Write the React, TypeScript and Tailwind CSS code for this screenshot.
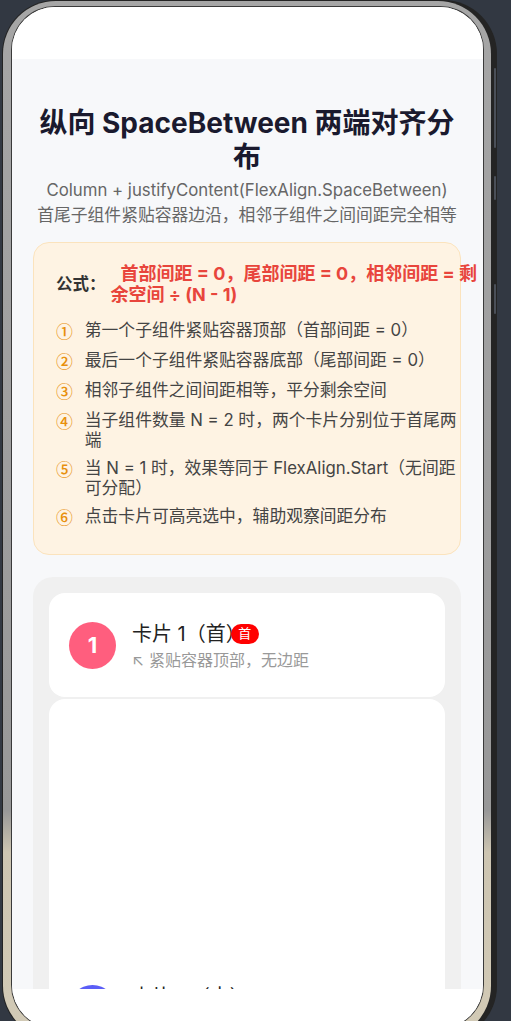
import React from "react";

const FONT = 'Inter, "Noto Sans CJK SC", sans-serif';
const CJK = '"Noto Sans CJK SC", sans-serif';

const items: string[] = [
  "第一个子组件紧贴容器顶部（首部间距 = 0）",
  "最后一个子组件紧贴容器底部（尾部间距 = 0）",
  "相邻子组件之间间距相等，平分剩余空间",
  "当子组件数量 N = 2 时，两个卡片分别位于首尾两端",
  "当 N = 1 时，效果等同于 FlexAlign.Start（无间距可分配）",
  "点击卡片可高亮选中，辅助观察间距分布",
];
const marks = ["①", "②", "③", "④", "⑤", "⑥"];

export default function App() {
  return (
    <div className="h-[1021px] w-full overflow-hidden bg-[#323842]" style={{ fontFamily: FONT }}>
      <div className="relative ml-[2px] h-[1040px] w-[495px] rounded-[54px] bg-[#242424] pl-[1px] pr-[6px] pt-[1px] pb-[1px]">
        {/* side buttons */}
        <div className="absolute right-[1px] top-[68px] h-[80px] w-[2px] rounded-full bg-[#4a4f58]" />
        <div className="absolute right-[1px] top-[176px] h-[24px] w-[2px] rounded-full bg-[#4a4f58]" />
        <div className="absolute right-[1px] top-[284px] h-[30px] w-[2px] rounded-full bg-[#4a4f58]" />
        <div className="h-full rounded-[53px] bg-[linear-gradient(to_bottom,#a6a6a6_0%,#989898_78%,#cdc5b1_82%,#d2cab6_100%)] pb-[10px] pl-[8px] pr-[7px] pt-[5px]">
          <div className="h-full rounded-[44px] bg-[#3a3a3a] p-[1px]">
            <div className="flex h-full flex-col overflow-hidden rounded-[43px] bg-white">
              <div className="h-[52px] shrink-0 bg-white" />
              <div className="h-[930px] shrink-0 overflow-hidden bg-[#f7f8fa] pl-[21px] pr-[22px] pt-[47px]">
                <h1
                  className="text-center text-[28px] font-bold leading-[34px] text-[#1a1a2e]"
                  style={{ fontFamily: FONT }}
                >
                  纵向 SpaceBetween 两端对齐分布
                </h1>
                <div className="mt-[4px] text-center text-[16.8px] leading-[24.5px] text-[#666666]">
                  <div>Column + justifyContent(FlexAlign.SpaceBetween)</div>
                  <div>首尾子组件紧贴容器边沿，相邻子组件之间间距完全相等</div>
                </div>

                <div className="mt-[15px] rounded-[16px] border border-[#fbe3bd] bg-[#fef3e3] pb-[26px] pl-[22px] pr-[22px] pt-[20px]">
                  <div className="flex items-center">
                    <span className="shrink-0 text-[16.5px] font-bold text-[#333333]">公式：</span>
                    <p className="ml-[5px] w-[375px] shrink-0 indent-[10px] text-[18px] font-bold leading-[21px] text-[#e8453c]">
                      首部间距 = 0，尾部间距 = 0，相邻间距 = 剩余空间 ÷ (N - 1)
                    </p>
                  </div>
                  <div className="mt-[15px] flex flex-col gap-[8px]">
                    {items.map((t, i) => (
                      <div key={i} className="flex items-start">
                        <span
                          className="shrink-0 text-[16.8px] font-medium leading-[22px] text-[#e8900c]"
                          style={{ fontFamily: CJK }}
                        >
                          {marks[i]}
                        </span>
                        <span className="ml-[12px] w-[380px] shrink-0 pt-[1px] text-[16.8px] leading-[19.5px] text-[#444444]">
                          {t}
                        </span>
                      </div>
                    ))}
                  </div>
                </div>

                <div className="mt-[22px] rounded-[20px] bg-[#f0f0f0] p-4">
                  <div className="flex h-[104px] items-center rounded-2xl bg-white px-5">
                    <div className="flex h-[47px] w-[47px] shrink-0 items-center justify-center rounded-full bg-[#ff5e7e] text-[22px] font-bold text-white">
                      1
                    </div>
                    <div className="ml-4 flex flex-col">
                      <div className="flex items-center">
                        <span className="text-[20px] leading-[28px] text-[#222222]">卡片 1（首）</span>
                        <span className="-ml-[15px] flex h-[20px] w-[28px] items-center justify-center rounded-full bg-[#ff0000] text-[13px] leading-none text-white">
                          首
                        </span>
                      </div>
                      <div className="mt-[1px] text-[16px] leading-[22px] text-[#999999]">↖ 紧贴容器顶部，无边距</div>
                    </div>
                  </div>
                  <div className="mt-[2px] flex h-[619px] items-center rounded-2xl bg-white px-5">
                    <div className="flex h-[47px] w-[47px] shrink-0 items-center justify-center rounded-full bg-[#5b5ef7] text-[22px] font-bold text-white">
                      2
                    </div>
                    <div className="ml-4 flex flex-col">
                      <span className="text-[20px] leading-[28px] text-[#222222]">卡片 2（中）</span>
                      <div className="mt-[1px] text-[16px] leading-[22px] text-[#999999]">↕ 与首尾间距相等</div>
                    </div>
                  </div>
                </div>
              </div>
              <div className="flex-1 bg-white" />
            </div>
          </div>
        </div>
      </div>
    </div>
  );
}
